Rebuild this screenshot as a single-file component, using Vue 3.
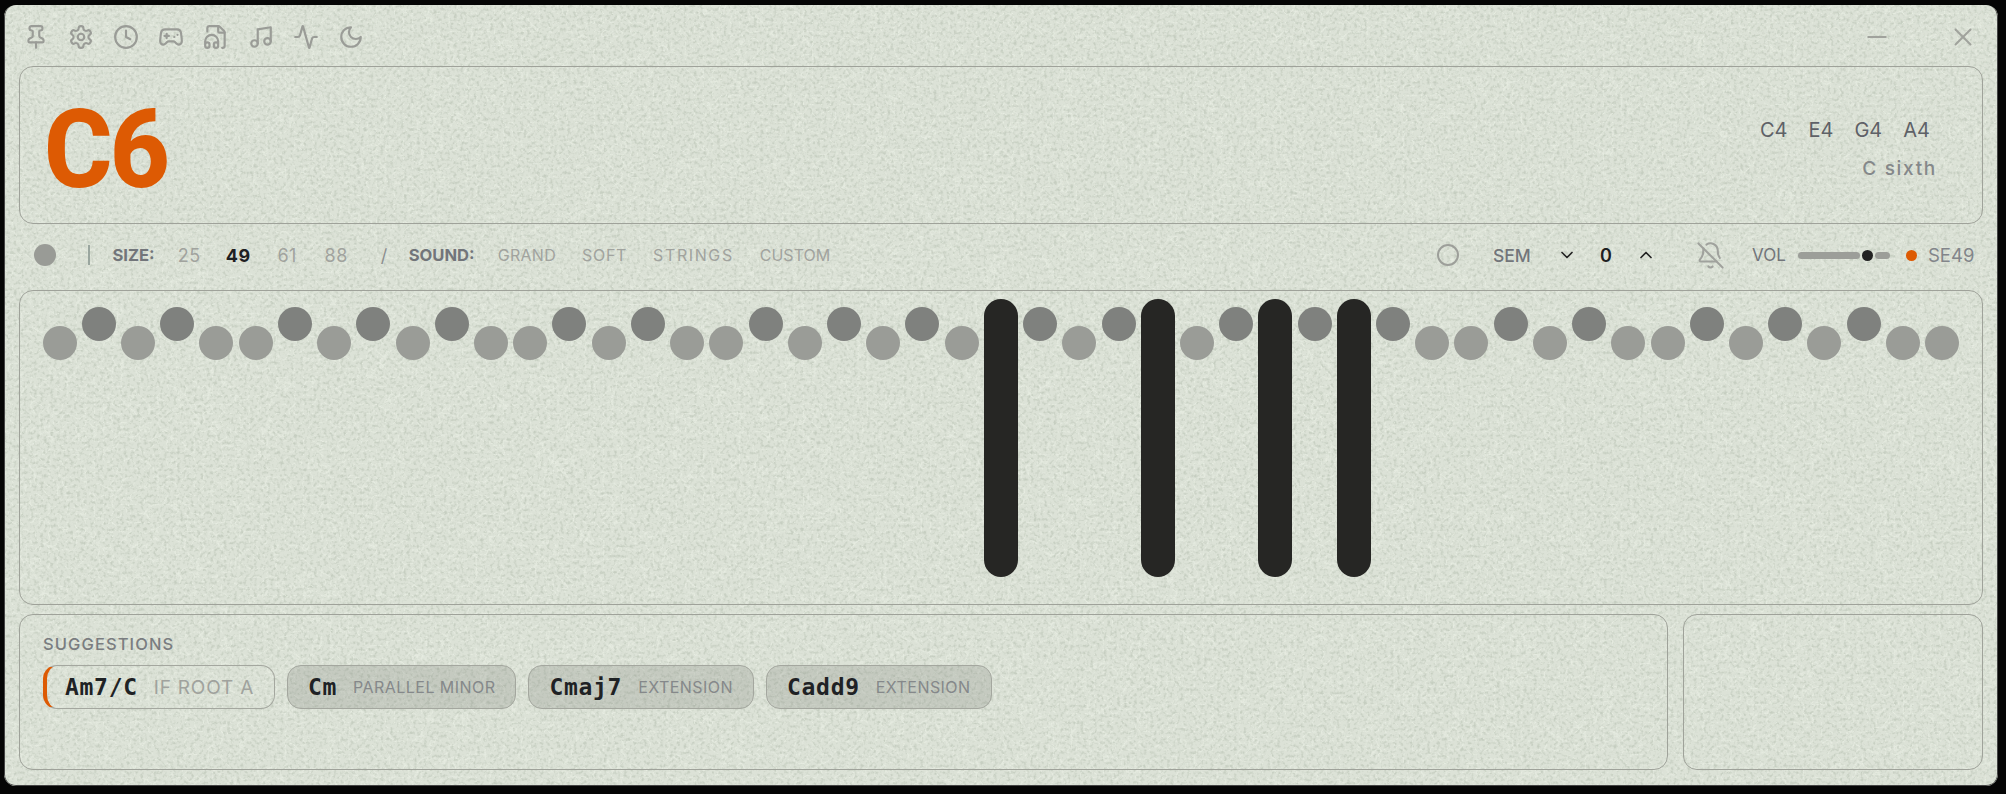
<script setup>
const tools = [
  { k: 'pin', paths: ['M12 17v5', 'M9 10.76a2 2 0 0 1-1.11 1.79l-1.78.9A2 2 0 0 0 5 15.24V16a1 1 0 0 0 1 1h12a1 1 0 0 0 1-1v-.76a2 2 0 0 0-1.11-1.79l-1.78-.9A2 2 0 0 1 15 10.76V7a1 1 0 0 1 1-1 2 2 0 0 0 0-4H8a2 2 0 0 0 0 4 1 1 0 0 1 1 1z'] },
  { k: 'gear', paths: ['M12.22 2h-.44a2 2 0 0 0-2 2v.18a2 2 0 0 1-1 1.73l-.43.25a2 2 0 0 1-2 0l-.15-.08a2 2 0 0 0-2.73.73l-.22.38a2 2 0 0 0 .73 2.73l.15.1a2 2 0 0 1 1 1.72v.51a2 2 0 0 1-1 1.74l-.15.09a2 2 0 0 0-.73 2.73l.22.38a2 2 0 0 0 2.73.73l.15-.08a2 2 0 0 1 2 0l.43.25a2 2 0 0 1 1 1.73V20a2 2 0 0 0 2 2h.44a2 2 0 0 0 2-2v-.18a2 2 0 0 1 1-1.73l.43-.25a2 2 0 0 1 2 0l.15.08a2 2 0 0 0 2.73-.73l.22-.39a2 2 0 0 0-.73-2.73l-.15-.08a2 2 0 0 1-1-1.74v-.5a2 2 0 0 1 1-1.74l.15-.09a2 2 0 0 0 .73-2.73l-.22-.38a2 2 0 0 0-2.73-.73l-.15.08a2 2 0 0 1-2 0l-.43-.25a2 2 0 0 1-1-1.73V4a2 2 0 0 0-2-2z', 'M15 12a3 3 0 1 1-6 0 3 3 0 0 1 6 0z'] },
  { k: 'clock', paths: ['M22 12a10 10 0 1 1-20 0 10 10 0 0 1 20 0z', 'M12 6v6l4 2'] },
  { k: 'pad', paths: ['M6 11h4', 'M8 9v4', 'M15 12h.01', 'M18 10h.01', 'M17.32 5H6.68a4 4 0 0 0-3.978 3.59c-.006.052-.01.101-.017.152C2.604 9.416 2 14.456 2 16a3 3 0 0 0 3 3c1 0 1.5-.5 2-1l1.414-1.414A2 2 0 0 1 9.828 16h4.344a2 2 0 0 1 1.414.586L17 18c.5.5 1 1 2 1a3 3 0 0 0 3-3c0-1.545-.604-6.584-.685-7.258-.007-.05-.011-.1-.017-.151A4 4 0 0 0 17.32 5z'] },
  { k: 'file', paths: ['M4 6.835V4a2 2 0 0 1 2-2h8a2.4 2.4 0 0 1 1.706.706l3.588 3.588A2.4 2.4 0 0 1 20 8v12a2 2 0 0 1-2 2h-.343', 'M14 2v5a1 1 0 0 0 1 1h5', 'M2 19a2 2 0 0 1 4 0v1a2 2 0 0 1-4 0v-4a6 6 0 0 1 12 0v4a2 2 0 0 1-4 0v-1a2 2 0 0 1 4 0'] },
  { k: 'music', paths: ['M9 18V5l12-2v13', 'M9 18a3 3 0 1 1-6 0 3 3 0 0 1 6 0z', 'M21 16a3 3 0 1 1-6 0 3 3 0 0 1 6 0z'] },
  { k: 'pulse', paths: ['M22 12h-2.48a2 2 0 0 0-1.93 1.46l-2.35 8.36a.25.25 0 0 1-.48 0L9.24 2.18a.25.25 0 0 0-.48 0l-2.35 8.36A2 2 0 0 1 4.49 12H2'] },
  { k: 'moon', paths: ['M12 3a6 6 0 0 0 9 9 9 9 0 1 1-9-9Z'] },
]
const bellOff = ['M10.268 21a2 2 0 0 0 3.464 0', 'M17 17H4a1 1 0 0 1-.74-1.673C4.59 13.956 6 12.499 6 8a6 6 0 0 1 .258-1.742', 'm2 2 20 20', 'M8.668 3.01A6 6 0 0 1 18 8c0 2.687.77 4.653 1.707 6.05']
const notes = ['C4', 'E4', 'G4', 'A4']
const sizes = [
  { t: '25', on: false }, { t: '49', on: true }, { t: '61', on: false }, { t: '88', on: false },
]
const sounds = [
  { t: 'GRAND', c: 's-grand' },
  { t: 'SOFT', c: 's-soft' },
  { t: 'STRINGS', c: 's-strings' },
  { t: 'CUSTOM', c: 's-custom' },
]
const blackPc = [1, 3, 6, 8, 10]
const active = [24, 28, 31, 33]
const keys = Array.from({ length: 49 }, (_, i) => ({
  i,
  cls: active.includes(i) ? 'on' : blackPc.includes(i % 12) ? 'black' : 'white',
}))
const chips = [
  { name: 'Cm', sub: 'PARALLEL MINOR' },
  { name: 'Cmaj7', sub: 'EXTENSION' },
  { name: 'Cadd9', sub: 'EXTENSION' },
]
</script>

<template>
  <div class="stage">
    <div class="window">
      <svg class="grain" width="100%" height="100%" aria-hidden="true">
        <filter id="grain-v" x="0" y="0" width="100%" height="100%" color-interpolation-filters="sRGB">
          <feTurbulence type="turbulence" baseFrequency="0.11" numOctaves="3" seed="11" />
          <feColorMatrix type="matrix" values="0 0 0 0 0.95  0 0 0 0 0.97  0 0 0 0 0.93  -5 0 0 0 1.05" />
        </filter>
        <filter id="grain-d" x="0" y="0" width="100%" height="100%" color-interpolation-filters="sRGB">
          <feTurbulence type="fractalNoise" baseFrequency="0.3" numOctaves="2" seed="4" />
          <feColorMatrix type="matrix" values="0 0 0 0 0.6  0 0 0 0 0.65  0 0 0 0 0.58  0 3 0 0 -1.4" />
        </filter>
        <rect width="100%" height="100%" filter="url(#grain-d)" opacity="0.32" />
        <rect width="100%" height="100%" filter="url(#grain-v)" opacity="0.5" />
      </svg>

      <header class="titlebar">
        <div class="tools">
          <svg v-for="t in tools" :key="t.k" class="ico" viewBox="0 0 24 24">
            <path v-for="(d, n) in t.paths" :key="n" :d="d" />
          </svg>
        </div>
        <div class="winbtns">
          <svg class="winico" viewBox="0 0 24 24"><path d="M5 12h14" /></svg>
          <svg class="winico" viewBox="0 0 24 24"><path d="M18 6 6 18" /><path d="m6 6 12 12" /></svg>
        </div>
      </header>

      <section class="panel hero">
        <div class="chord">C6</div>
        <div class="heroright">
          <div class="notes"><span v-for="n in notes" :key="n">{{ n }}</span></div>
          <div class="chordname">C sixth</div>
        </div>
      </section>

      <div class="toolbar">
        <span class="dot"></span>
        <span class="sep"></span>
        <span class="lbl size">SIZE:</span>
        <span v-for="s in sizes" :key="s.t" class="opt num" :class="{ cur: s.on }">{{ s.t }}</span>
        <span class="slash">/</span>
        <span class="lbl sound">SOUND:</span>
        <span v-for="s in sounds" :key="s.t" class="opt word" :class="s.c">{{ s.t }}</span>
        <span class="grow"></span>
        <span class="ring"></span>
        <span class="sem">SEM</span>
        <svg class="chev down" viewBox="0 0 24 24"><path d="m6 9 6 6 6-6" /></svg>
        <span class="val">0</span>
        <svg class="chev up" viewBox="0 0 24 24"><path d="m18 15-6-6-6 6" /></svg>
        <svg class="bell" viewBox="0 0 24 24"><path v-for="(d, n) in bellOff" :key="n" :d="d" /></svg>
        <span class="vol">VOL</span>
        <span class="slider">
          <span class="track a"></span>
          <span class="thumb"></span>
          <span class="track b"></span>
        </span>
        <span class="led"></span>
        <span class="model">SE49</span>
      </div>

      <section class="panel piano">
        <div v-for="k in keys" :key="k.i" class="col">
          <span class="key" :class="k.cls"></span>
        </div>
      </section>

      <div class="bottom">
        <section class="panel sugg">
          <div class="sugg-title">SUGGESTIONS</div>
          <div class="chips">
            <div class="chip first">
              <span class="cname">Am7<i class="sl">/</i>C</span>
              <span class="csub big">IF ROOT A</span>
            </div>
            <div v-for="c in chips" :key="c.name" class="chip fill">
              <span class="cname">{{ c.name }}</span>
              <span class="csub">{{ c.sub }}</span>
            </div>
          </div>
        </section>
        <section class="panel side"></section>
      </div>
    </div>
  </div>
</template>

<style>
html, body { margin: 0; background: #000; }
</style>

<style scoped>
.stage {
  width: 2006px;
  height: 794px;
  background: #050505;
  padding: 5px 8px 8px 4px;
  box-sizing: border-box;
  overflow: hidden;
}
.window {
  position: relative;
  height: 100%;
  box-sizing: border-box;
  padding: 0 15px 16px 15px;
  background: #dce2d7;
  border-radius: 12px;
  display: flex;
  flex-direction: column;
  overflow: hidden;
  font-family: Inter, "Liberation Sans", sans-serif;
}
.window::after {
  content: "";
  position: absolute;
  inset: 0;
  border-radius: 12px;
  box-shadow: inset 2px 0 0 -1px #444, inset -2px 0 0 -1px #444, inset 0 -2px 0 -1px #444;
  pointer-events: none;
}
.window > * { position: relative; z-index: 1; }
.window > .grain { position: absolute; inset: 0; z-index: 0; pointer-events: none; }
.titlebar {
  height: 61px;
  flex: none;
  display: flex;
  align-items: center;
  justify-content: space-between;
  padding: 3px 5px 0 4px;
  box-sizing: border-box;
}
.tools { display: flex; gap: 19px; }
.ico { width: 26px; height: 26px; fill: none; stroke: #9a9c97; stroke-width: 2; stroke-linecap: round; stroke-linejoin: round; }
.winbtns { display: flex; gap: 56px; }
.winico { width: 30px; height: 30px; fill: none; stroke: #a0a29c; stroke-width: 1.6; stroke-linecap: round; stroke-linejoin: round; }
.panel {
  border: 1.5px solid #9fa29a;
  border-radius: 14px;
  box-sizing: border-box;
}
.hero {
  height: 158px;
  flex: none;
  display: flex;
  justify-content: space-between;
  align-items: center;
  padding: 0 46px 0 24px;
}
.chord {
  font-family: Roboto, sans-serif;
  font-weight: 800;
  font-size: 110px;
  line-height: 1;
  letter-spacing: -3px;
  padding-top: 10px;
  color: #dd5a03;
  transform: scaleX(.95);
  transform-origin: left center;
}
.heroright { display: flex; flex-direction: column; align-items: flex-end; gap: 15px; padding-top: 8px; }
.notes { display: flex; gap: 21px; margin-right: 6px; font-size: 20px; line-height: 24px; color: #5e6167; }
.chordname { font-size: 19px; line-height: 24px; letter-spacing: 1.7px; font-weight: 500; color: #85888a; margin-right: -1px; }
.toolbar {
  height: 66px;
  flex: none;
  display: flex;
  align-items: center;
  padding: 0 8px 4px 15px;
  box-sizing: border-box;
}
.dot { width: 22px; height: 22px; border-radius: 50%; background: #999b96; flex: none; }
.sep { width: 1.5px; height: 20px; background: #9aa69f; margin: 0 23px 0 32px; flex: none; }
.lbl { font-weight: 700; color: #72757a; font-size: 16.6px; }
.size { margin-right: 10px; }
.opt { color: #a1a39e; }
.num { width: 49px; text-align: center; font-size: 18px; letter-spacing: .5px; flex: none; }
.cur { color: #1e2022; font-weight: 700; }
.slash { color: #8c8f8f; margin: 0 21px 0 20px; font-size: 18px; width: 7px; flex: none; }
.word { margin-left: 26px; font-size: 16px; }
.sound + .word { margin-left: 23px; }
.s-grand { letter-spacing: .3px; }
.s-soft { letter-spacing: .7px; }
.s-strings { letter-spacing: 1.6px; }
.s-custom { letter-spacing: 0; }
.grow { flex: 1; }
.ring { width: 22px; height: 22px; border: 2px solid #9d9f9a; border-radius: 50%; box-sizing: border-box; flex: none; }
.sem { font-size: 17.5px; font-weight: 500; color: #72757a; margin-left: 34px; width: 38px; flex: none; }
.chev { width: 20px; height: 20px; fill: none; stroke: #222; stroke-width: 2; stroke-linecap: round; stroke-linejoin: round; flex: none; }
.down { margin-left: 26px; }
.up { margin-left: 23px; }
.val { font-weight: 600; color: #1e2022; font-size: 18px; width: 14px; text-align: center; margin-left: 22px; flex: none; }
.bell { width: 29px; height: 29px; fill: none; stroke: #a0a29d; stroke-width: 1.7; stroke-linecap: round; stroke-linejoin: round; margin-left: 40px; flex: none; }
.vol { font-size: 17px; color: #72757a; margin-left: 27px; width: 46px; flex: none; }
.slider { display: flex; align-items: center; width: 93px; flex: none; }
.track { height: 7px; background: #9c9e99; border-radius: 4px; display: block; }
.track.a { width: 62px; }
.track.b { width: 15px; }
.thumb { width: 11px; height: 11px; border-radius: 50%; background: #222; margin: 0 2px; flex: none; }
.led { width: 11px; height: 11px; border-radius: 50%; background: #dd5a03; margin-left: 15px; flex: none; }
.model { font-size: 18.5px; color: #82858a; margin-left: 11px; width: 47px; flex: none; white-space: nowrap; }
.piano {
  height: 315px;
  flex: none;
  display: flex;
  padding: 8px 20px 0;
}
.col { flex: 1 1 0; display: flex; justify-content: center; align-items: flex-start; min-width: 0; }
.key { width: 34px; flex: none; display: block; }
.white { height: 34px; border-radius: 50%; background: #9a9c97; margin-top: 26.5px; }
.black { height: 34px; border-radius: 50%; background: #7f817e; margin-top: 7.5px; }
.on { height: 278px; border-radius: 17px; background: #262624; }
.bottom { flex: 1; display: flex; gap: 15px; margin-top: 9px; min-height: 0; }
.sugg { flex: 1; padding: 19px 23px; }
.side { width: 300px; flex: none; }
.sugg-title { font-size: 16.5px; letter-spacing: 1.1px; font-weight: 500; color: #7a7d80; line-height: 20px; }
.chips { display: flex; gap: 12px; margin-top: 11px; }
.chip {
  height: 44px;
  box-sizing: border-box;
  border: 1.5px solid #a4a79f;
  border-radius: 14px;
  display: flex;
  align-items: center;
  gap: 16px;
  padding: 0 20px;
}
.first { border-left: 4px solid #dd5a03; padding-left: 18px; width: 232px; flex: none; }
.fill { background: rgba(128, 130, 125, .25); }
.cname { font-family: "DejaVu Sans Mono", monospace; font-weight: 700; font-size: 23px; color: #1f2225; letter-spacing: .7px; }
.sl { font-style: normal; }
.csub { font-size: 16px; letter-spacing: .45px; color: #85888a; white-space: nowrap; }
.big { font-size: 19px; letter-spacing: .8px; color: #a0a29d; }
</style>
